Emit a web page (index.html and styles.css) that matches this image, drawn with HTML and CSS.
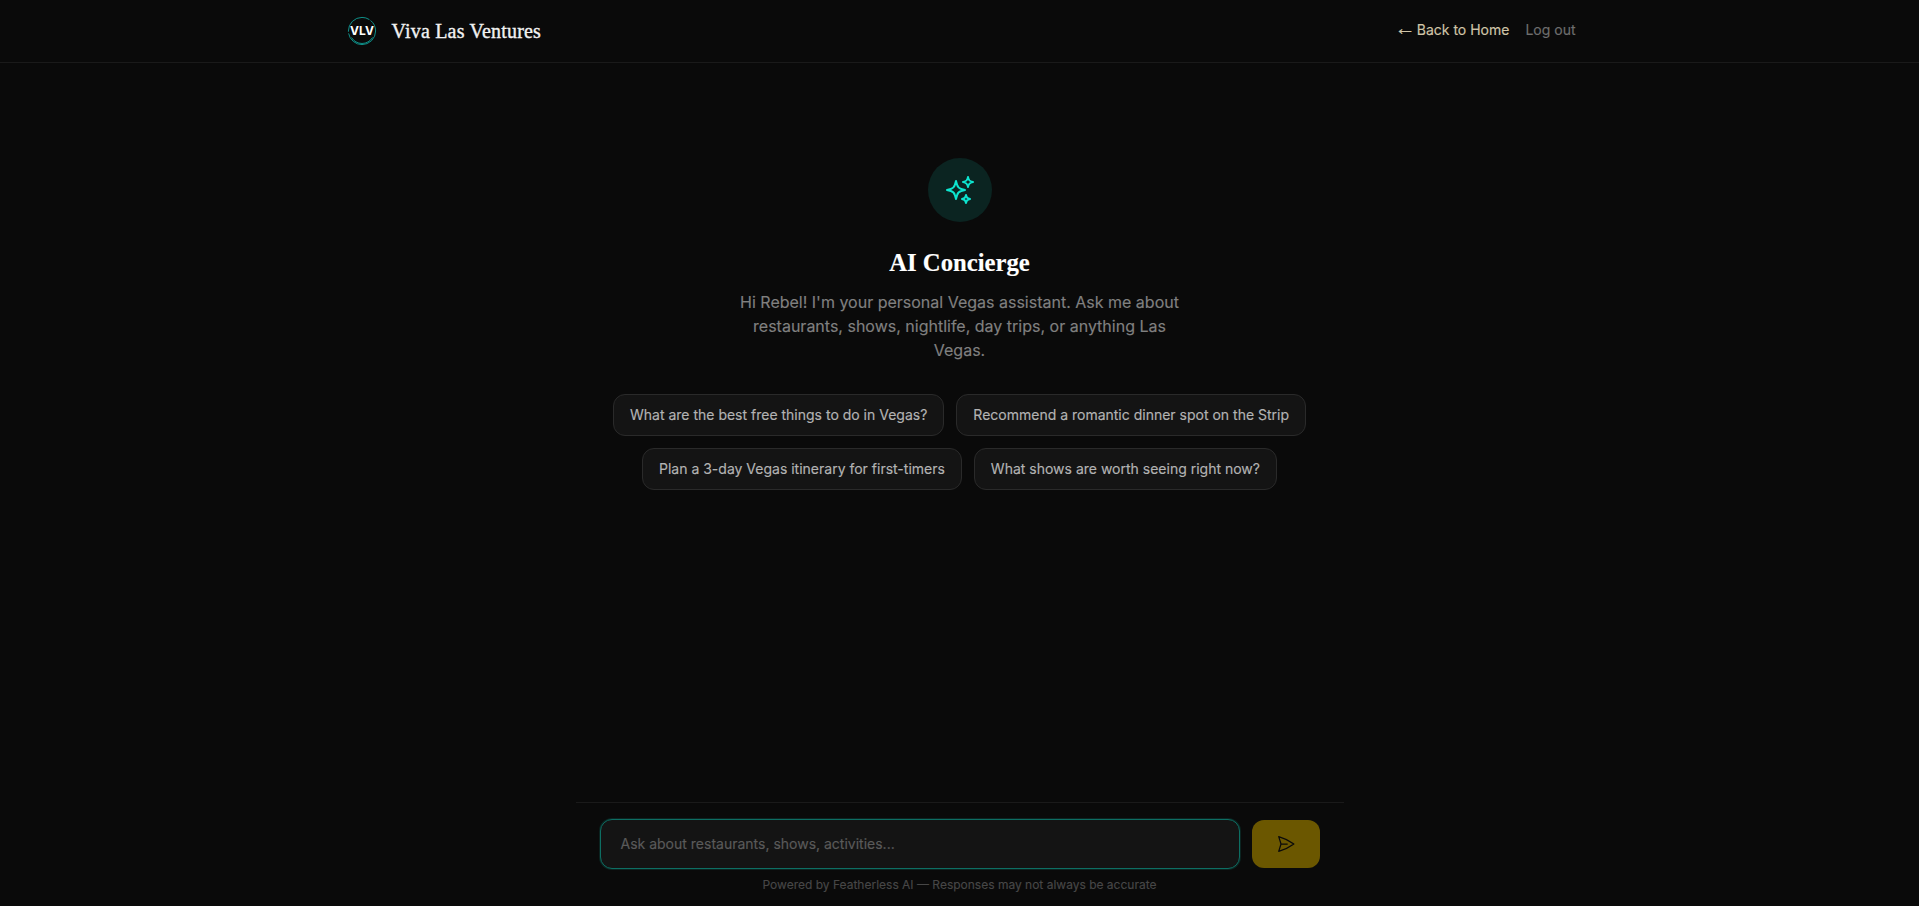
FILE: index.html
```html
<!DOCTYPE html>
<html lang="en">
<head>
<meta charset="utf-8">
<title>AI Concierge</title>
<link rel="stylesheet" href="styles.css">
</head>
<body>
<header class="nav">
  <div class="nav-inner">
    <a class="brand">
      <svg class="logo" viewBox="0 0 32 32" fill="none">
        <circle cx="16" cy="16" r="13.6" stroke="#0f8f88" stroke-width="1" stroke-dasharray="40 1.5 30 1.5"/>
        <path d="M5.5 22.5A12.2 12.2 0 0 0 26.5 22.5" stroke="#0f8f88" stroke-width="1"/>
        <text x="16" y="20.2" class="logo-text">VLV</text>
      </svg>
      <span class="brand-name">Viva Las Ventures</span>
    </a>
    <nav class="nav-links">
      <a class="back"><span class="arrow">←</span> Back to Home</a>
      <a class="logout">Log out</a>
    </nav>
  </div>
</header>
<main class="chat">
  <section class="welcome">
    <div class="icon-circle">
      <svg class="sparkle" viewBox="0 0 24 24" fill="none" stroke="#0de5cf" stroke-width="1.5" stroke-linecap="round" stroke-linejoin="round">
        <path d="M9.813 15.904L9 18.75l-.813-2.846a4.5 4.5 0 00-3.09-3.09L2.25 12l2.846-.813a4.5 4.5 0 003.09-3.09L9 5.25l.813 2.846a4.5 4.5 0 003.09 3.09L15.75 12l-2.846.813a4.5 4.5 0 00-3.09 3.09zM18.259 8.715L18 9.75l-.259-1.035a3.375 3.375 0 00-2.455-2.456L14.25 6l1.036-.259a3.375 3.375 0 002.455-2.456L18 2.25l.259 1.035a3.375 3.375 0 002.456 2.456L21.75 6l-1.035.259a3.375 3.375 0 00-2.456 2.456zM16.894 20.567L16.5 21.75l-.394-1.183a2.25 2.25 0 00-1.423-1.423L13.5 18.75l1.183-.394a2.25 2.25 0 001.423-1.423l.394-1.183.394 1.183a2.25 2.25 0 001.423 1.423l1.183.394-1.183.394a2.25 2.25 0 00-1.423 1.423z"/>
      </svg>
    </div>
    <h1 class="title">AI Concierge</h1>
    <p class="intro">Hi Rebel! I'm your personal Vegas assistant. Ask me about restaurants, shows, nightlife, day trips, or anything Las Vegas.</p>
    <div class="chips">
      <button class="chip">What are the best free things to do in Vegas?</button>
      <button class="chip">Recommend a romantic dinner spot on the Strip</button>
      <button class="chip">Plan a 3-day Vegas itinerary for first-timers</button>
      <button class="chip">What shows are worth seeing right now?</button>
    </div>
  </section>
  <section class="composer">
    <div class="composer-row">
      <div class="input">Ask about restaurants, shows, activities...</div>
      <button class="send" aria-label="Send">
        <svg class="send-icon" viewBox="0 0 24 24" fill="none" stroke="#0a0a0a" stroke-width="1.5" stroke-linecap="round" stroke-linejoin="round">
          <path d="M6 12L3.269 3.126A59.768 59.768 0 0121.485 12 59.77 59.77 0 013.27 20.876L5.999 12zm0 0h7.5"/>
        </svg>
      </button>
    </div>
    <p class="disclaimer">Powered by Featherless AI — Responses may not always be accurate</p>
  </section>
</main>
</body>
</html>
```
FILE: styles.css
```css
* { box-sizing: border-box; margin: 0; padding: 0; }
html, body { height: 100%; }
body {
  background: #0a0a0a;
  color: #fff;
  font-family: Inter, "Liberation Sans", sans-serif;
  -webkit-text-stroke: 0.15px;
  display: flex;
  flex-direction: column;
  height: 906px;
  overflow: hidden;
}
.nav { height: 63px; border-bottom: 1px solid #1a1a1a; flex: none; }
.nav-inner {
  width: 1280px;
  margin: 0 auto;
  padding: 0 24px;
  height: 100%;
  display: flex;
  align-items: center;
  justify-content: space-between;
}
.brand { display: flex; align-items: center; gap: 14px; padding-left: 2px; }
.logo { width: 32px; height: 32px; display: block; }
.logo-text { font: 700 12px Inter, sans-serif; fill: #fff; text-anchor: middle; }
.brand-name { font: 400 20px/30px "Liberation Serif", serif; color: #f2f2f2; -webkit-text-stroke: 0.35px #f2f2f2; letter-spacing: 0.2px; }
.nav-links { display: flex; gap: 16px; font-size: 14px; line-height: 20px; margin-top: -3px; }
.back { color: #d0c5a8; }
.arrow { font-family: "Liberation Sans", sans-serif; font-size: 21px; line-height: 0; letter-spacing: -3px; }
.logout { color: #6e6e6e; }
.chat {
  width: 768px;
  margin: 0 auto;
  flex: 1;
  display: flex;
  flex-direction: column;
}
.welcome {
  flex: 1;
  padding-top: 95px;
  display: flex;
  flex-direction: column;
  align-items: center;
}
.icon-circle {
  width: 64px;
  height: 64px;
  border-radius: 50%;
  background: #0b2421;
  display: flex;
  align-items: center;
  justify-content: center;
  margin-bottom: 24px;
}
.sparkle { width: 32px; height: 32px; }
.title {
  font: 700 24.7px/34px "Liberation Serif", serif;
  color: #fff;
  margin-bottom: 10px;
}
.intro {
  width: 448px;
  font-size: 16px;
  line-height: 24px;
  color: #808080;
  text-align: center;
  margin-bottom: 32px;
}
.chips {
  width: 720px;
  display: flex;
  flex-wrap: wrap;
  justify-content: center;
  gap: 12px;
}
.chip {
  height: 42px;
  padding: 0 16px 1px;
  background: #141414;
  border: 1px solid #2a2a2a;
  border-radius: 12px;
  color: #b3b3b3;
  font: 400 14px Inter, sans-serif;
  -webkit-text-stroke: 0.15px;
}
.composer { border-top: 1px solid #1a1a1a; padding: 16px 24px 13px; flex: none; }
.composer-row { display: flex; gap: 12px; align-items: center; }
.input {
  flex: 1;
  height: 50px;
  padding: 0 20px 1px;
  display: flex;
  align-items: center;
  background: #141414;
  border: 1px solid #0d6e63;
  border-radius: 12px;
  box-shadow: 0 0 0 1px #0b2421;
  color: #5a5a5a;
  font-size: 14px;
}
.send {
  width: 68px;
  height: 48px;
  border: none;
  border-radius: 12px;
  background: #6b5700;
  display: flex;
  align-items: center;
  justify-content: center;
}
.send-icon { width: 20px; height: 20px; }
.disclaimer {
  margin-top: 8px;
  font-size: 12px;
  line-height: 16px;
  color: #474747;
  text-align: center;
}
```
